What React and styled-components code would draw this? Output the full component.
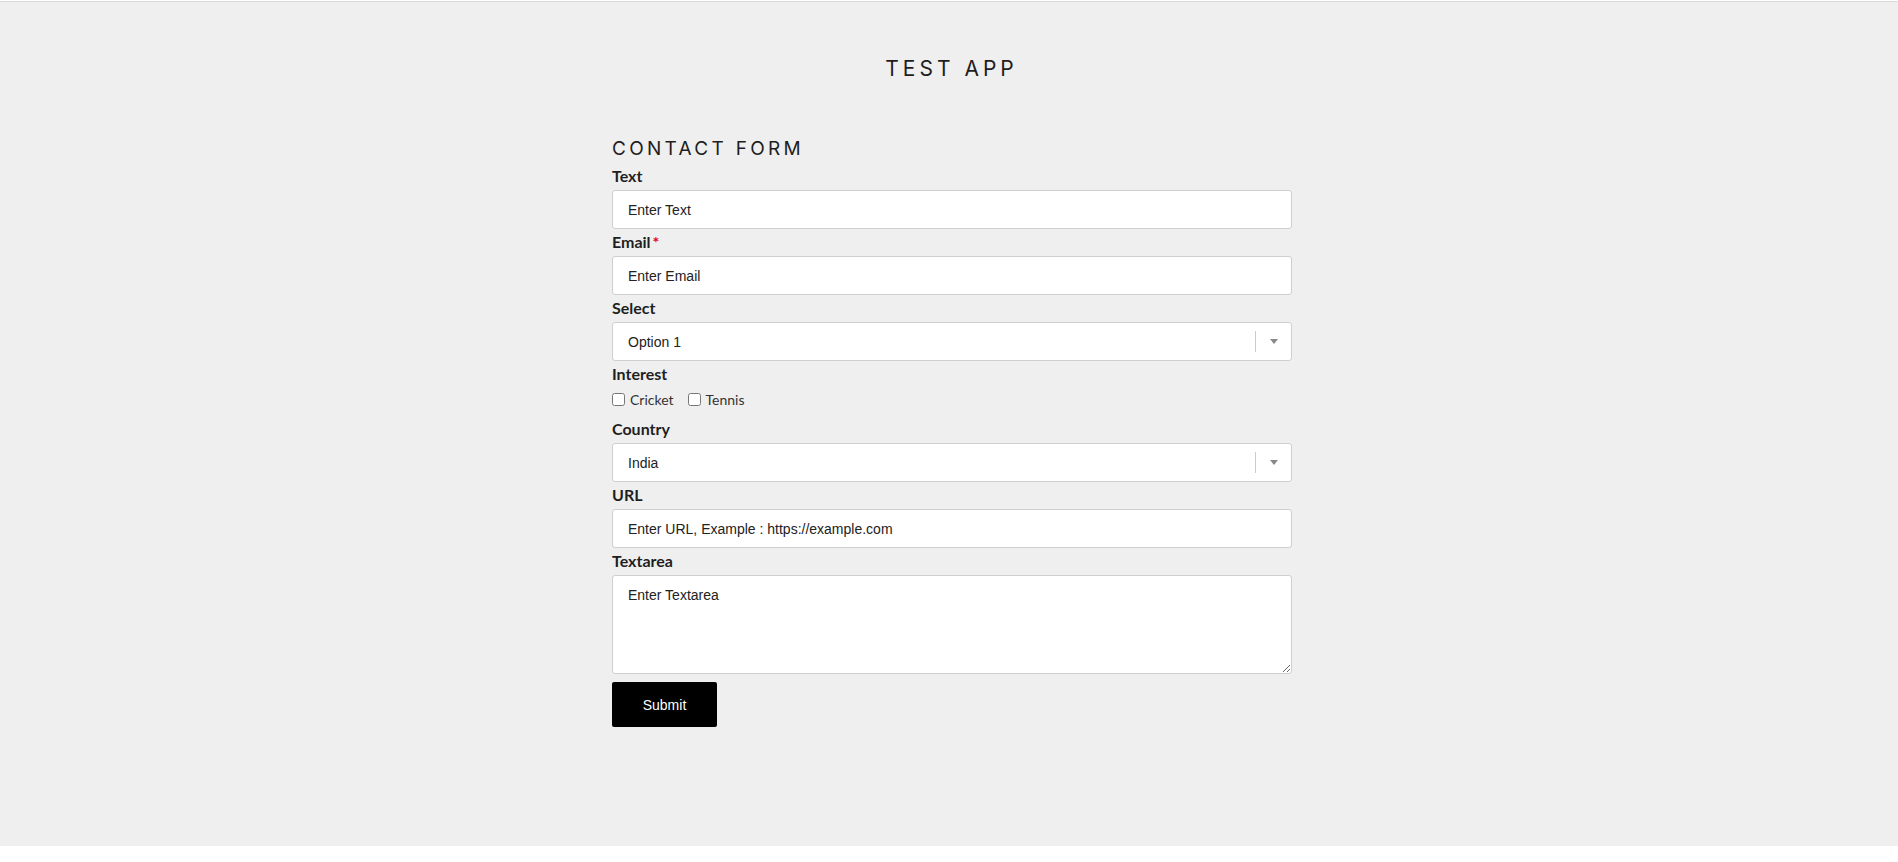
import { createGlobalStyle } from "styled-components"
import styled from "styled-components"

const GlobalStyle = createGlobalStyle`
  html, body {
    margin: 0;
    padding: 0;
    background: #fff;
  }
  * { box-sizing: border-box; }
`

const Page = styled.div`
  margin-top: 1px;
  border-top: 1px solid #dadada;
  min-height: 845px;
  background: #efefef;
  padding-top: 54px;
`

const AppTitle = styled.h1`
  margin: 0;
  padding-left: 5px;
  font-family: "Inter", "Open Sans", sans-serif;
  font-weight: 400;
  font-size: 21px;
  line-height: 26px;
  letter-spacing: 4px;
  text-align: center;
  color: #1e1e1e;
`

const Container = styled.div`
  width: 686px;
  margin: 0 auto;
  padding-left: 6px;
  padding-top: 55px;
`

const FormTitle = styled.h2`
  margin: 0 0 2px;
  font-family: "Inter", "Open Sans", sans-serif;
  font-weight: 400;
  font-size: 19px;
  line-height: 24px;
  letter-spacing: 3.3px;
  color: #1e1e1e;
`

const Form = styled.form`
  display: flex;
  flex-direction: column;
  width: 680px;
`

const Label = styled.label`
  display: block;
  margin: 2px 0 3px;
  font-family: "Lato", "Noto Sans", sans-serif;
  font-weight: 700;
  font-size: 16px;
  line-height: 22px;
  color: #1f1f1f;
`

const Required = styled.span`
  color: #e00;
  margin-left: 2px;
`

const fieldBase = `
  width: 100%;
  border: 1px solid #cfcfcf;
  border-radius: 3px;
  background: #fff;
  font-family: "Liberation Sans", Arial, sans-serif;
  font-size: 14px;
  color: #222;
  outline: none;
`

const Input = styled.input`
  ${fieldBase}
  height: 39px;
  padding: 0 15px;
  &::placeholder { color: #222; opacity: 1; }
`

const TextArea = styled.textarea`
  ${fieldBase}
  display: block;
  height: 99px;
  padding: 11px 15px;
  resize: vertical;
  &::placeholder { color: #222; opacity: 1; }
`

const SelectBox = styled.div`
  ${fieldBase}
  height: 39px;
  display: flex;
  align-items: center;
  padding-left: 15px;
`

const SelectValue = styled.span`
  flex: 1;
`

const Separator = styled.span`
  width: 1px;
  height: 21px;
  background: #cccccc;
`

const Indicator = styled.span`
  display: flex;
  align-items: center;
  justify-content: center;
  width: 35px;
  height: 100%;
`

const CheckRow = styled.div`
  display: flex;
  align-items: center;
  height: 28px;
  padding-bottom: 5px;
`

const CheckOption = styled.label`
  display: flex;
  align-items: center;
  margin-right: 14px;
  font-family: "Lato", "Noto Sans", sans-serif;
  font-size: 14px;
  color: #333;
`

const CheckBox = styled.input`
  width: 13px;
  height: 13px;
  margin: 0 5px 0 0;
`

const SubmitButton = styled.button`
  margin-top: 8px;
  width: 105px;
  height: 45px;
  border: none;
  border-radius: 2px;
  background: #000;
  color: #fff;
  font-family: "Liberation Sans", Arial, sans-serif;
  font-size: 14px;
  cursor: pointer;
`

function Caret() {
  return (
    <svg width="8" height="5" viewBox="0 0 8 5">
      <path d="M0 0 H8 L4 5 Z" fill="#888" />
    </svg>
  )
}

function FakeSelect({ value }) {
  return (
    <SelectBox>
      <SelectValue>{value}</SelectValue>
      <Separator />
      <Indicator>
        <Caret />
      </Indicator>
    </SelectBox>
  )
}

export default function App() {
  return (
    <>
      <GlobalStyle />
      <Page>
        <AppTitle>TEST APP</AppTitle>
        <Container>
          <FormTitle>CONTACT FORM</FormTitle>
          <Form onSubmit={(e) => e.preventDefault()}>
            <Label>Text</Label>
            <Input type="text" placeholder="Enter Text" />

            <Label>
              Email<Required>*</Required>
            </Label>
            <Input type="email" placeholder="Enter Email" />

            <Label>Select</Label>
            <FakeSelect value="Option 1" />

            <Label>Interest</Label>
            <CheckRow>
              <CheckOption>
                <CheckBox type="checkbox" />
                Cricket
              </CheckOption>
              <CheckOption>
                <CheckBox type="checkbox" />
                Tennis
              </CheckOption>
            </CheckRow>

            <Label>Country</Label>
            <FakeSelect value="India" />

            <Label>URL</Label>
            <Input type="url" placeholder="Enter URL, Example : https://example.com" />

            <Label>Textarea</Label>
            <TextArea placeholder="Enter Textarea" />

            <div>
              <SubmitButton type="submit">Submit</SubmitButton>
            </div>
          </Form>
        </Container>
      </Page>
    </>
  )
}
